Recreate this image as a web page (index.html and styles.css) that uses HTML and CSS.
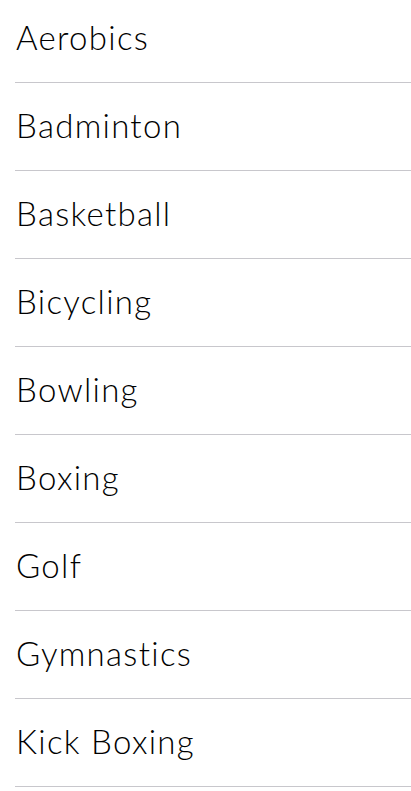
FILE: index.html
```html
<!DOCTYPE html>
<html>
<head>
<meta charset="utf-8">
<link rel="stylesheet" href="styles.css">
</head>
<body>
<ul class="list">
  <li class="row"><span class="label">Aerobics</span></li>
  <li class="row"><span class="label">Badminton</span></li>
  <li class="row"><span class="label">Basketball</span></li>
  <li class="row"><span class="label">Bicycling</span></li>
  <li class="row"><span class="label">Bowling</span></li>
  <li class="row"><span class="label">Boxing</span></li>
  <li class="row"><span class="label">Golf</span></li>
  <li class="row"><span class="label">Gymnastics</span></li>
  <li class="row"><span class="label">Kick Boxing</span></li>
</ul>
</body>
</html>
```
FILE: styles.css
```css
html, body {
  margin: 0;
  padding: 0;
  background: #ffffff;
  overflow: hidden;
}
.list {
  list-style: none;
  margin: -5px 0 0 15px;
  padding: 0;
}
.row {
  height: 87px;
  border-bottom: 1px solid #c8c7cc;
  display: flex;
  align-items: center;
  padding-left: 1px;
  padding-bottom: 3px;
  box-sizing: content-box;
  height: 84px;
}
.label {
  font-family: Lato, "Noto Sans", sans-serif;
  font-size: 33px;
  letter-spacing: 1.3px;
  color: #000;
  font-weight: 300;
}
```
